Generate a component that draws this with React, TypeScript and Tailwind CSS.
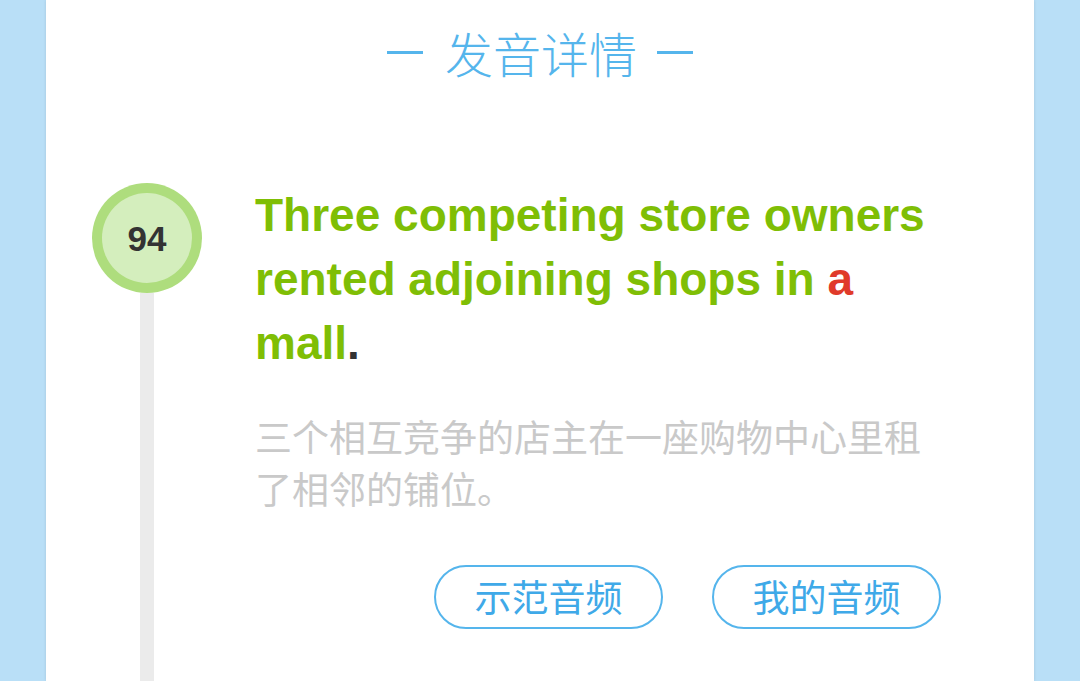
import React from "react";

const cjk = '"Noto Sans CJK SC", "Noto Sans", sans-serif';
const latin = '"Liberation Sans", Arial, "Noto Sans CJK SC", sans-serif';

function ScoreBadge({ score }: { score: number }) {
  return (
    <div className="flex flex-col items-center w-[110px] shrink-0 self-stretch">
      <div className="w-[110px] h-[110px] rounded-full bg-[#aedd7d] flex items-center justify-center shrink-0">
        <div className="w-[90px] h-[90px] rounded-full bg-[#d4eebd] flex items-center justify-center">
          <span
            className="text-[35px] font-bold text-[#333333] leading-none"
            style={{ fontFamily: latin }}
          >
            {score}
          </span>
        </div>
      </div>
      <div className="w-[14px] flex-1 bg-[#ebebeb]" />
    </div>
  );
}

function AudioButton({ label }: { label: string }) {
  return (
    <button
      className="w-[229px] h-[64px] rounded-full border-[2.5px] border-[#55b5ec] text-[#3fa9e8] text-[37px] flex items-center justify-center bg-white"
      style={{ fontFamily: cjk }}
    >
      {label}
    </button>
  );
}

export default function App() {
  return (
    <div className="w-[1080px] h-[681px] bg-[#b9dff7] flex justify-center overflow-hidden">
      <div className="w-[988px] h-full bg-white flex flex-col shadow-[0_0_3px_rgba(0,0,0,0.12)]">
        <div className="pt-[22px] h-[183px] flex justify-center items-start">
          <h1
            className="flex items-center text-[48px] font-light leading-[60px] text-[#55b5ec]"
            style={{ fontFamily: cjk }}
          >
            <span className="inline-block w-[36px] h-[3px] bg-[#55b5ec] mr-[22px]" />
            发音详情
            <span className="inline-block w-[36px] h-[3px] bg-[#55b5ec] ml-[20px]" />
          </h1>
        </div>
        <div className="flex flex-1 pl-[46px] pr-[93px] gap-[53px]">
          <ScoreBadge score={94} />
          <div className="flex-1 flex flex-col">
            <p
              className="text-[46px] font-bold leading-[64px] text-[#7fbe05]"
              style={{ fontFamily: latin }}
            >
              Three competing store owners rented adjoining shops in{" "}
              <span className="text-[#e03a2a]">a</span> mall
              <span className="text-[#333333]">.</span>
            </p>
            <p
              className="mt-[35px] text-[37px] leading-[52px] text-[#c9c9c9]"
              style={{ fontFamily: cjk }}
            >
              三个相互竞争的店主在一座购物中心里租了相邻的铺位。
            </p>
            <div className="mt-[51px] flex justify-end gap-[49px]">
              <AudioButton label="示范音频" />
              <AudioButton label="我的音频" />
            </div>
          </div>
        </div>
      </div>
    </div>
  );
}
